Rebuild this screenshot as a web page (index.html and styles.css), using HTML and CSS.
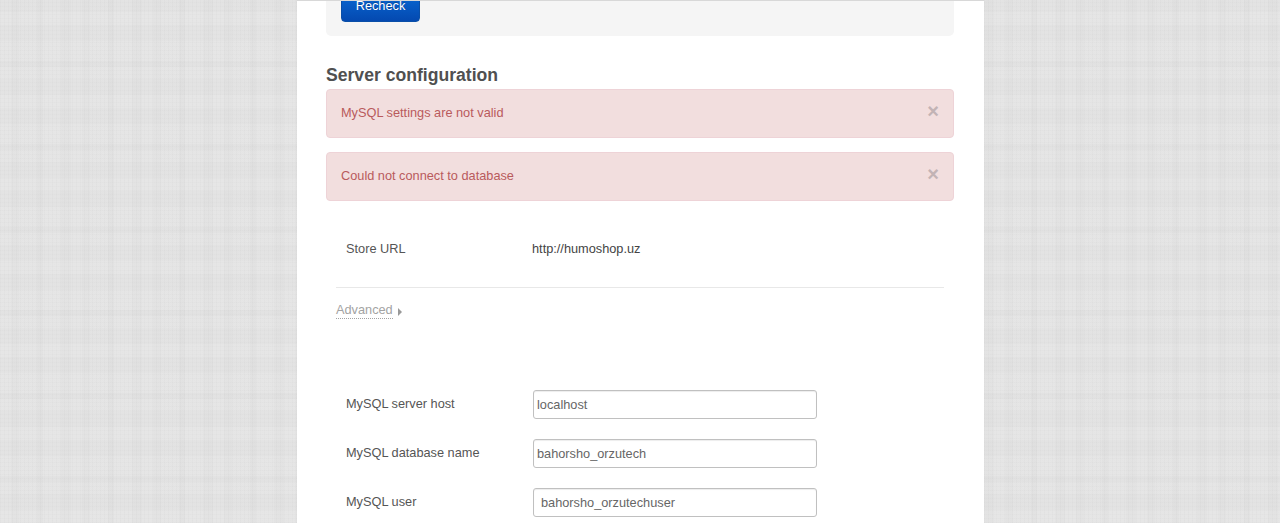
FILE: index.html
```html
<!DOCTYPE html>
<html lang="en">
<head>
<meta charset="utf-8">
<title>Server configuration</title>
<link rel="stylesheet" href="styles.css">
</head>
<body>
<main class="card">
  <div class="well"><button class="btn" type="button">Recheck</button></div>
  <h2 class="title">Server configuration</h2>
  <div class="alert"><span>MySQL settings are not valid</span><span class="close">&times;</span></div>
  <div class="alert"><span>Could not connect to database</span><span class="close">&times;</span></div>
  <div class="row row-url"><span class="label">Store URL</span><span class="value">http://humoshop.uz</span></div>
  <hr class="rule">
  <div class="advanced"><a class="adv-link">Advanced</a><span class="caret"></span></div>
  <form class="fields">
    <div class="row"><label class="label">MySQL server host</label><input class="input" value="localhost"></div>
    <div class="row"><label class="label">MySQL database name</label><input class="input" value="bahorsho_orzutech"></div>
    <div class="row"><label class="label">MySQL user</label><input class="input input-shift" value="bahorsho_orzutechuser"></div>
  </form>
</main>
</body>
</html>
```
FILE: styles.css
```css
* { box-sizing: border-box; }
html, body { margin: 0; height: 523px; overflow: hidden; }
body {
  font-family: "Liberation Sans", Arial, sans-serif;
  font-size: 12.75px;
  color: #555;
  background-color: #e4e4e4;
  background-image:
    repeating-linear-gradient(90deg, rgba(255,255,255,.035) 0 11px, rgba(0,0,0,.008) 11px 19px, rgba(255,255,255,.02) 19px 37px, rgba(0,0,0,.012) 37px 43px, rgba(255,255,255,.03) 43px 61px, rgba(0,0,0,.008) 61px 71px),
    repeating-linear-gradient(0deg, rgba(255,255,255,.03) 0 13px, rgba(0,0,0,.008) 13px 29px, rgba(255,255,255,.018) 29px 41px, rgba(0,0,0,.011) 41px 47px, rgba(255,255,255,.025) 47px 67px, rgba(0,0,0,.007) 67px 83px),
    repeating-linear-gradient(90deg, rgba(0,0,0,.012) 0 1px, transparent 1px 4px),
    repeating-linear-gradient(0deg, rgba(0,0,0,.012) 0 1px, transparent 1px 4px);
}
.card {
  width: 687px;
  height: 523px;
  margin-left: 297px;
  padding: 0 30px 0 29px;
  background: #fff;
  border-top: 1px solid #d8d8d8;
  overflow: hidden;
}
.well {
  display: flow-root;
  height: 35px;
  padding-left: 15px;
  background: #f5f5f5;
  border-radius: 0 0 5px 5px;
}
.btn {
  display: block;
  width: 79px;
  height: 33px;
  margin-top: -12px;
  padding: 0;
  border: 1px solid #0a4fa8;
  border-radius: 4px;
  background: linear-gradient(#0a6cd8, #0449b0);
  color: #fff;
  font: 12.75px "Liberation Sans", Arial, sans-serif;
  text-shadow: 0 -1px 0 rgba(0,0,0,.25);
}
.title {
  margin: 28px 0 3px;
  font-size: 17.6px;
  line-height: 22px;
  font-weight: 700;
  color: #505050;
}
.alert {
  display: flex;
  justify-content: space-between;
  align-items: center;
  height: 49px;
  margin-bottom: 14px;
  padding: 0 14px 2px 14px;
  font-size: 12.75px;
  color: #b95a5c;
  background: #f2dede;
  border: 1px solid #eed3d7;
  border-radius: 4px;
}
.close {
  margin-top: -3px;
  font-size: 20px;
  line-height: 20px;
  font-weight: 700;
  color: #c2b3b5;
}
.row { display: flex; align-items: center; padding-left: 20px; }
.label { width: 187px; flex: none; color: #555; padding-bottom: 2px; }
.value { color: #444; margin-left: -1px; }
.row-url { height: 20px; margin-top: 37px; }
.row-url .label { padding-bottom: 0; }
.rule { margin: 29px 10px 0; border: 0; border-top: 1px solid #e8e8e8; }
.advanced { display: flex; align-items: center; margin: 14px 0 0 10px; height: 17px; }
.adv-link { color: #a3a3a3; border-bottom: 1px dotted #a3a3a3; line-height: 16px; }
.caret {
  margin: 2px 0 0 5px;
  border-left: 4px solid #999;
  border-top: 4px solid transparent;
  border-bottom: 4px solid transparent;
}
.fields { display: flex; flex-direction: column; gap: 20px; margin-top: 71px; }
.input {
  width: 284px;
  height: 29px;
  padding: 0 3px;
  font: 12.75px "Liberation Sans", Arial, sans-serif;
  color: #666;
  background: #fff;
  border: 1px solid #c0c0c0;
  border-radius: 3px;
  box-shadow: inset 0 1px 1px rgba(0,0,0,.075);
}
.input-shift { padding-left: 7px; }
```
